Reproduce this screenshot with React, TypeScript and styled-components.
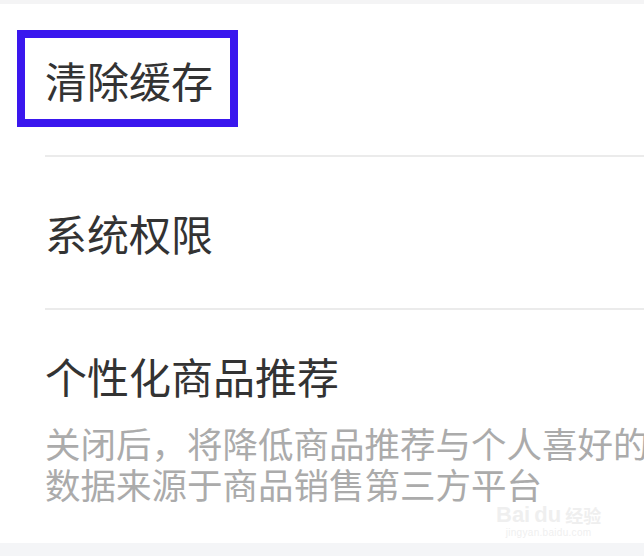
import React from 'react';
import styled, { createGlobalStyle } from 'styled-components';

const GlobalStyle = createGlobalStyle`
  html, body {
    margin: 0;
    padding: 0;
    background: #ffffff;
  }
  body {
    font-family: "Noto Sans CJK SC", "Noto Sans", sans-serif;
  }
`;

const Page = styled.div`
  width: 644px;
  height: 556px;
  overflow: hidden;
  display: flex;
  flex-direction: column;
  background: #ffffff;
`;

const TopStrip = styled.div`
  height: 4px;
  background: #f4f4f5;
`;

const List = styled.div`
  display: flex;
  flex-direction: column;
`;

const Row = styled.div`
  position: relative;
  height: 151px;
  padding-left: 45px;
  display: flex;
  align-items: center;
`;

const Divider = styled.div`
  height: 2px;
  margin-left: 45px;
  background: #ebebeb;
`;

const Title = styled.div`
  font-size: 42px;
  line-height: 50px;
  color: #333333;
  white-space: nowrap;
`;

const Highlight = styled.div`
  position: absolute;
  left: 17px;
  top: 26px;
  width: 221px;
  height: 97px;
  box-sizing: border-box;
  border: 8px solid #3a17ee;
`;

const TallRow = styled.div`
  position: relative;
  padding: 41px 0 0 45px;
  height: 233px;
  box-sizing: border-box;
`;

const Description = styled.div`
  margin-top: 21px;
  font-size: 35.5px;
  line-height: 41px;
  color: #ababab;
  white-space: nowrap;
`;

const Watermark = styled.div`
  position: absolute;
  left: 496px;
  top: 193px;
  display: flex;
  flex-direction: column;
  align-items: center;
  color: #efefef;
  font-family: "Liberation Sans", sans-serif;
  pointer-events: none;
`;

const MarkTop = styled.div`
  display: flex;
  align-items: center;
  gap: 4px;
  font-size: 22px;
  line-height: 24px;
  font-weight: bold;
`;

const MarkCn = styled.span`
  font-family: "Noto Sans CJK SC", sans-serif;
  font-size: 18px;
`;

const MarkSub = styled.div`
  font-size: 10px;
  line-height: 12px;
  letter-spacing: 0.3px;
`;

const BottomBand = styled.div`
  flex: 1;
  background: #f4f5f7;
`;

const App: React.FC = () => {
  return (
    <Page>
      <GlobalStyle />
      <TopStrip />
      <List>
        <Row>
          <Title>清除缓存</Title>
          <Highlight />
        </Row>
        <Divider />
        <Row>
          <Title>系统权限</Title>
        </Row>
        <Divider />
        <TallRow>
          <Title>个性化商品推荐</Title>
          <Description>
            关闭后，将降低商品推荐与个人喜好的
            <br />
            数据来源于商品销售第三方平台
          </Description>
          <Watermark>
            <MarkTop>
              <span>Bai</span>
              <span>du</span>
              <MarkCn>经验</MarkCn>
            </MarkTop>
            <MarkSub>jingyan.baidu.com</MarkSub>
          </Watermark>
        </TallRow>
      </List>
      <BottomBand />
    </Page>
  );
};

export default App;
